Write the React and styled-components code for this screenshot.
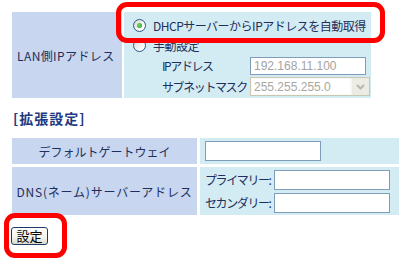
import React from 'react';
import styled, { createGlobalStyle } from 'styled-components';

const GlobalStyle = createGlobalStyle`
  html, body {
    margin: 0;
    padding: 0;
    background: #ffffff;
  }
  body {
    font-family: "Noto Sans CJK JP", "Liberation Sans", sans-serif;
    font-size: 12px;
    color: #1e2f5c;
  }
`;

const Page = styled.div`
  position: relative;
  width: 404px;
  height: 264px;
  box-sizing: border-box;
  padding: 12px 0 0 12px;
  overflow: hidden;
`;

const LanTable = styled.div`
  display: grid;
  grid-template-columns: 110px 247px;
  column-gap: 2px;
  height: 86px;
`;

const ExtTable = styled.div`
  display: grid;
  grid-template-columns: 185px 199px;
  grid-template-rows: 26px 48px;
  gap: 3px;
  margin-top: 12px;
`;

const LabelCell = styled.div`
  background: #c8d6ef;
  display: flex;
  align-items: center;
  justify-content: ${p => (p.$center ? 'center' : 'flex-start')};
  padding-left: ${p => (p.$center ? '0' : '5px')};
  letter-spacing: ${p => p.$spacing || '0'};
  white-space: nowrap;
`;

const ValueCell = styled.div`
  background: #d3ebf3;
  display: flex;
  flex-direction: column;
  justify-content: ${p => (p.$center ? 'center' : 'flex-start')};
  padding: ${p => p.$pad || '0'};
  gap: ${p => p.$gap || '0'};
`;

const OptionRow = styled.label`
  display: flex;
  align-items: center;
  height: 20px;
  white-space: nowrap;
  letter-spacing: -0.5px;
`;

const Radio = styled.span`
  width: 11px;
  height: 11px;
  border-radius: 50%;
  border: 1px solid #2b5884;
  background: linear-gradient(135deg, #d8d8d0 0%, #ffffff 80%);
  margin-right: 7px;
  display: flex;
  align-items: center;
  justify-content: center;
  flex: none;

  &::after {
    content: '';
    width: 5px;
    height: 5px;
    border-radius: 50%;
    background: ${p => (p.$checked ? 'radial-gradient(circle at 40% 40%, #6fd86f, #1f9a1f)' : 'transparent')};
  }
`;

const FieldRow = styled.div`
  display: flex;
  align-items: center;
  height: ${p => p.$h || '21px'};
  padding-left: ${p => p.$indent || '29px'};
`;

const FieldLabel = styled.span`
  width: ${p => p.$w || '88px'};
  flex: none;
  white-space: nowrap;
  letter-spacing: -1.4px;
`;

const TextBox = styled.input`
  box-sizing: border-box;
  width: 116px;
  height: ${p => p.$h || '18px'};
  margin: 0;
  padding: 0 3px;
  border: 1px solid #7f9db9;
  background: #ffffff;
  font-family: "Liberation Sans", sans-serif;
  font-size: 12px;
  color: #a3a3a3;
  -webkit-text-fill-color: #a3a3a3;
  outline: none;
`;

const SelectBox = styled.div`
  box-sizing: border-box;
  width: 120px;
  height: 19px;
  border: 1px solid #c9c6b4;
  background: #fbfbf6;
  display: flex;
  align-items: stretch;
  font-family: "Liberation Sans", sans-serif;
  font-size: 12px;
  color: #a8a8a0;
`;

const SelectValue = styled.span`
  flex: 1;
  display: flex;
  align-items: center;
  padding-left: 2px;
  background: #ffffff;
  margin: 1px;
`;

const ArrowButton = styled.span`
  width: 17px;
  background: #ecebe4;
  border-left: 1px solid #f6f5ef;
  display: flex;
  align-items: center;
  justify-content: center;
`;

const SectionTitle = styled.div`
  margin-top: 12px;
  height: 16px;
  line-height: 16px;
  font-size: 14px;
  font-weight: bold;
  color: #1f3a80;
  letter-spacing: 1px;
  padding-left: 1px;
`;

const SubmitButton = styled.button`
  display: block;
  margin: 12px 0 0 -1px;
  width: 37px;
  height: 18px;
  padding: 0;
  border: 1px solid #1d3a66;
  border-radius: 3px;
  background: linear-gradient(#ffffff 0%, #f3f2ec 60%, #dcd9cc 100%);
  font-family: "Noto Sans CJK JP", sans-serif;
  font-size: 13px;
  line-height: 14px;
  color: #000000;
`;

const Highlight = styled.div`
  position: absolute;
  box-sizing: border-box;
  border: 5px solid #ff0000;
  border-radius: 11px;
  pointer-events: none;
  left: ${p => p.$x}px;
  top: ${p => p.$y}px;
  width: ${p => p.$w}px;
  height: ${p => p.$h}px;
`;

function App() {
  return (
    <Page>
      <GlobalStyle />
      <LanTable>
        <LabelCell $spacing="0.4px">LAN側IPアドレス</LabelCell>
        <ValueCell $pad="3px 0 0 9px">
          <OptionRow>
            <Radio $checked />
            DHCPサーバーからIPアドレスを自動取得
          </OptionRow>
          <OptionRow>
            <Radio />
            手動設定
          </OptionRow>
          <FieldRow>
            <FieldLabel>IPアドレス</FieldLabel>
            <TextBox disabled defaultValue="192.168.11.100" />
          </FieldRow>
          <FieldRow>
            <FieldLabel>サブネットマスク</FieldLabel>
            <SelectBox>
              <SelectValue>255.255.255.0</SelectValue>
              <ArrowButton>
                <svg width="9" height="6" viewBox="0 0 9 6">
                  <path d="M1 1 L4.5 4.5 L8 1" fill="none" stroke="#b9b8b0" strokeWidth="2" />
                </svg>
              </ArrowButton>
            </SelectBox>
          </FieldRow>
        </ValueCell>
      </LanTable>

      <SectionTitle>[拡張設定]</SectionTitle>

      <ExtTable>
        <LabelCell $center>デフォルトゲートウェイ</LabelCell>
        <ValueCell $center $pad="0 0 0 5px">
          <TextBox $h="20px" />
        </ValueCell>
        <LabelCell $center $spacing="0.8px">DNS(ネーム)サーバーアドレス</LabelCell>
        <ValueCell $center $pad="0 0 0 5px" $gap="3px">
          <FieldRow $h="20px" $indent="0">
            <FieldLabel $w="69px">プライマリー:</FieldLabel>
            <TextBox $h="20px" />
          </FieldRow>
          <FieldRow $h="20px" $indent="0">
            <FieldLabel $w="69px">セカンダリー:</FieldLabel>
            <TextBox $h="20px" />
          </FieldRow>
        </ValueCell>
      </ExtTable>

      <SubmitButton type="button">設定</SubmitButton>

      <Highlight $x={116} $y={2} $w={269} $h={41} />
      <Highlight $x={4} $y={213} $w={63} $h={45} />
    </Page>
  );
}

export default App;
